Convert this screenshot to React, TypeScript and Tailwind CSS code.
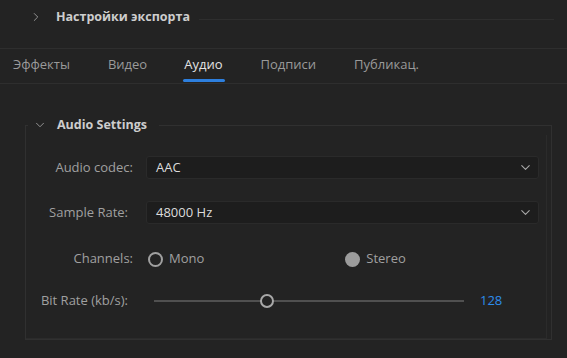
import { ChevronRight, ChevronDown } from 'lucide-react'

const TABS = ['Эффекты', 'Видео', 'Аудио', 'Подписи', 'Публикац.']
const TAB_X = ['ml-[13px]', 'ml-[38px]', 'ml-[37px]', 'ml-[38px]', 'ml-[38px]']

function Select({ value }: { value: string }) {
  return (
    <div className="flex h-[23px] w-[393px] items-center justify-between rounded-[3px] border border-[#2a2a2a] bg-[#1d1d1d] pl-[9px] pr-[5px]">
      <span className="text-[#dcdcdc]">{value}</span>
      <ChevronDown size={15} strokeWidth={1.75} className="text-[#a8a8a8]" aria-hidden="true" />
    </div>
  )
}

export default function App() {
  const bitrate = 128
  const pct = ((bitrate - 32) / (320 - 32)) * 100 + 3

  return (
    <div
      className="h-[358px] w-[567px] overflow-hidden bg-[#232323] text-[13px] text-[#a0a0a0]"
      style={{ fontFamily: '"Open Sans", "Noto Sans", sans-serif' }}
    >
      {/* Header */}
      <div className="flex h-[49px] items-center border-b border-[#2e2e2e] pb-[14px]">
        <ChevronRight size={14} strokeWidth={1.5} className="ml-[29px] text-[#a0a0a0]" aria-hidden="true" />
        <span className="ml-[13px] text-[12.5px] font-bold text-[#cdcdcd]">Настройки экспорта</span>
        <div className="ml-[9px] mt-[4px] h-px w-[355px] bg-[#2e2e2e]" />
      </div>

      {/* Tabs */}
      <div className="flex h-[35px] border-b border-[#2e2e2e]">
        {TABS.map((t, i) => (
          <div key={t} className={`${TAB_X[i]} relative flex items-center pb-[2px]`}>
            <span className={t === 'Аудио' ? 'text-[#e2e2e2]' : 'text-[#9a9a9a]'}>{t}</span>
            {t === 'Аудио' && (
              <div className="absolute bottom-[1px] left-[-1px] right-[-3px] h-[3px] rounded-full bg-[#2d7fde]" />
            )}
          </div>
        ))}
      </div>

      {/* Audio Settings panel */}
      <fieldset className="ml-[25px] mt-[31px] w-[527px] border border-[#303030] pb-0">
        <legend className="ml-[2px] flex h-[20px] items-center pr-[12px]">
          <ChevronDown size={14} strokeWidth={1.5} className="ml-[5px] text-[#a0a0a0]" aria-hidden="true" />
          <span className="ml-[10px] text-[12.5px] font-bold text-[#cdcdcd]">Audio Settings</span>
        </legend>

        <div className="mr-[4px] flex flex-col border-b border-r border-[#2b2b2b] pb-[26px] pt-[21px]">
          <div className="flex h-[23px] items-center">
            <div className="w-[107px] text-right">Audio codec:</div>
            <div className="ml-[13px]"><Select value="AAC" /></div>
          </div>

          <div className="mt-[22px] flex h-[23px] items-center">
            <div className="w-[107px] pr-[5px] text-right">Sample Rate:</div>
            <div className="ml-[13px]"><Select value="48000 Hz" /></div>
          </div>

          <div className="mt-[24px] flex h-[22px] items-center">
            <div className="w-[107px] text-right">Channels:</div>
            <div className="ml-[15px] flex items-center">
              <span className="h-[15px] w-[15px] rounded-full border-2 border-[#a0a0a0]" />
              <span className="ml-[6px]">Mono</span>
            </div>
            <div className="ml-[141px] flex items-center">
              <span className="h-[15px] w-[15px] rounded-full bg-[#9c9c9c]" />
              <span className="ml-[6px]">Stereo</span>
            </div>
          </div>

          <div className="mt-[20px] flex h-[22px] items-center">
            <div className="w-[107px] pr-[5px] text-right">Bit Rate (kb/s):</div>
            <div className="relative ml-[21px] h-[14px] w-[310px]">
              <div className="absolute left-0 right-0 top-[6px] h-[2px] bg-[#505050]" />
              <div
                className="absolute top-0 h-[14px] w-[14px] -translate-x-1/2 rounded-full border-2 border-[#a8a8a8] bg-[#232323]"
                style={{ left: `${pct}%` }}
              />
            </div>
            <span className="ml-[16px] text-[#2d8ceb]">{bitrate}</span>
          </div>
        </div>
      </fieldset>
    </div>
  )
}
